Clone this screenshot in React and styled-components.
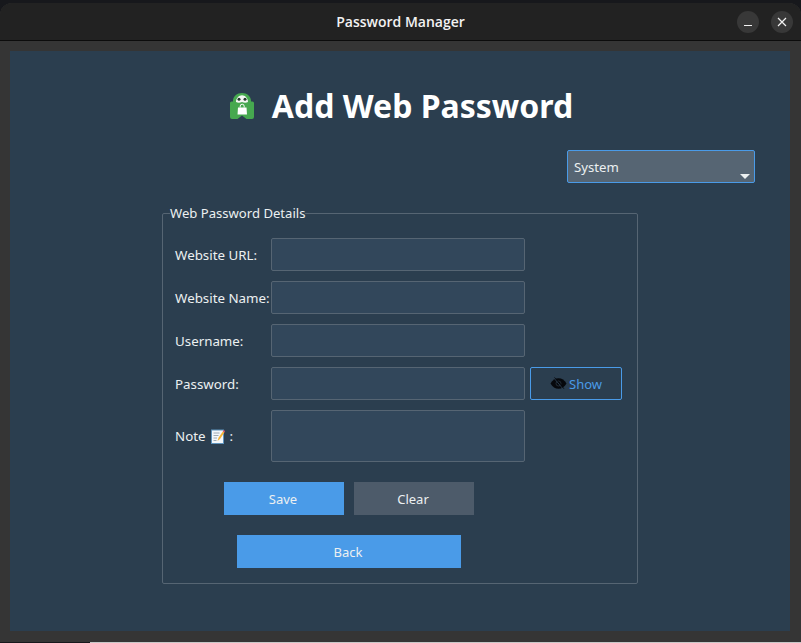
import styled, { createGlobalStyle } from "styled-components";

const GlobalStyle = createGlobalStyle`
  html, body {
    margin: 0;
    padding: 0;
    height: 100%;
    background: #17181c;
    overflow: hidden;
  }
  * {
    box-sizing: border-box;
  }
`;

const Screen = styled.div`
  width: 801px;
  height: 643px;
  padding-top: 3px;
  display: flex;
  flex-direction: column;
  font-family: "Noto Sans", "Open Sans", sans-serif;
`;

const Window = styled.div`
  width: 801px;
  height: 639px;
  flex-shrink: 0;
  display: flex;
  flex-direction: column;
  background: #353535;
  border-radius: 12px 12px 0 0;
  overflow: hidden;
`;

const DesktopStrip = styled.div`
  height: 1px;
  margin-left: 90px;
  background: #c8c8c8;
`;

const TitleBar = styled.div`
  height: 38px;
  flex-shrink: 0;
  display: flex;
  align-items: center;
  justify-content: flex-end;
  gap: 12px;
  padding: 0 8px 0 0;
  background: #222222;
  border-bottom: 1px solid #0c0c0c;
  position: relative;
`;

const WindowTitle = styled.div`
  position: absolute;
  left: 0;
  right: 0;
  top: 9px;
  text-align: center;
  font-family: "Open Sans", "Noto Sans", sans-serif;
  font-size: 14px;
  line-height: 20px;
  font-weight: 600;
  color: #f2f2f2;
`;

const WinButton = styled.button`
  width: 22px;
  height: 22px;
  padding: 0;
  border: 0;
  border-radius: 50%;
  background: #383838;
  display: flex;
  align-items: center;
  justify-content: center;
`;

const Panel = styled.div`
  margin: 10px 11px 0 10px;
  height: 580px;
  background: #2b3e4f;
  display: flex;
  flex-direction: column;
  align-items: center;
`;

const Heading = styled.div`
  display: flex;
  align-items: center;
  gap: 17px;
  margin-top: 32px;
  height: 46px;
  margin-left: 2px;
`;

const HeadingText = styled.h1`
  margin: 0;
  font-size: 32px;
  line-height: 46px;
  font-weight: 700;
  color: #ffffff;
`;

const ThemeRow = styled.div`
  align-self: stretch;
  display: flex;
  justify-content: flex-end;
  margin-top: 21px;
  padding-right: 35px;
`;

const Combo = styled.div`
  width: 188px;
  height: 33px;
  border: 1px solid #4a9be8;
  border-radius: 2px;
  background: #566573;
  color: #ecf0f1;
  font-size: 13.2px;
  line-height: 33px;
  padding: 0 6px;
  position: relative;
`;

const ComboArrow = styled.span`
  position: absolute;
  right: 4px;
  bottom: 3px;
  width: 0;
  height: 0;
  border-left: 5px solid transparent;
  border-right: 5px solid transparent;
  border-top: 5px solid #ecf0f1;
`;

const Details = styled.fieldset`
  width: 476px;
  height: 371px;
  margin: 30px 0 0 0;
  padding: 0 0 0 12px;
  border: 1px solid #566573;
  border-radius: 2px;
  position: relative;
`;

const DetailsTitle = styled.legend`
  position: absolute;
  left: 7px;
  top: -9px;
  padding: 0;
  background: #2b3e4f;
  font-size: 13.1px;
  line-height: 16px;
  color: #ecf0f1;
`;

const FormGrid = styled.div`
  display: grid;
  grid-template-columns: 96px 254px auto;
  row-gap: 10px;
  margin-top: 24px;
  align-items: center;
`;

const Label = styled.label`
  font-size: 13.33px;
  line-height: 18px;
  color: #ecf0f1;
  white-space: nowrap;
  display: flex;
  align-items: center;
  gap: 5px;
`;

const Field = styled.div`
  width: 254px;
  height: ${({ $tall }) => ($tall ? "52px" : "33px")};
  background: #32475b;
  border: 1px solid #566573;
  border-radius: 2px;
`;

const ShowButton = styled.button`
  width: 92px;
  height: 33px;
  margin-left: 5px;
  padding: 0;
  background: transparent;
  border: 1px solid #4a9be8;
  border-radius: 2px;
  color: #4a9be8;
  font-family: inherit;
  font-size: 13px;
  display: flex;
  align-items: center;
  justify-content: center;
  gap: 2px;
`;

const ActionRow = styled.div`
  display: flex;
  gap: 10px;
  margin: 20px 0 0 49px;
`;

const ActionButton = styled.button`
  width: ${({ $wide }) => ($wide ? "224px" : "120px")};
  height: 33px;
  padding: 0 2px 0 0;
  border: 0;
  background: ${({ $muted }) => ($muted ? "#4d5b6a" : "#4a9be8")};
  color: #ecf0f1;
  font-family: inherit;
  font-size: 13px;
`;

const BackRow = styled.div`
  margin: 20px 0 0 62px;
`;

const ShieldLogo = () => (
  <svg width="26" height="29" viewBox="0 0 26 29">
    <path
      d="M4 9.500V9C4 4.500 8 1 13 1s9 3.500 9 8v.500h1.500A1.500 1.500 0 0 1 25 11v14a2 2 0 0 1-2 2h-5.500L13 23.500 8.500 27H3a2 2 0 0 1-2-2V11a1.500 1.500 0 0 1 1.500-1.500z"
      fill="#46a84f"
    />
    <path d="M7 10C7 6 10 3.200 13 3.200S19 6 19 10c-2 1-4 .800-6 0-2 .800-4 1-6 0z" fill="#f4f7f4" />
    <circle cx="10" cy="7.200" r="1.500" fill="#24382c" />
    <circle cx="16" cy="7.200" r="1.500" fill="#24382c" />
    <path d="M9 15.500h8.500l.5 7H8.500z" fill="#ffffff" />
    <path d="M11.200 15.500v-1.300a2 2 0 0 1 4 0v1.300" fill="none" stroke="#ffffff" strokeWidth="1" />
  </svg>
);

const HiddenEye = () => (
  <svg width="17" height="13" viewBox="0 0 17 13">
    <path d="M0.500 6.500C2.500 3 5.200 1.200 8.500 1.200s6 1.800 8 5.300c-2 3.500-4.700 5.300-8 5.300S2.500 10 0.500 6.500z" fill="#06080c" />
    <circle cx="8.500" cy="6.500" r="2.500" fill="none" stroke="#27333f" strokeWidth="0.800" />
    <path d="M3.800 0.800l9.500 11.400" stroke="#2b3e4f" strokeWidth="1" />
    <path d="M4.500 0.400l9.500 11.400" stroke="#06080c" strokeWidth="0.800" />
  </svg>
);

const MemoIcon = () => (
  <svg width="14" height="15" viewBox="0 0 14 15">
    <rect x="0.500" y="1" width="12" height="13.500" fill="#f3f7fb" stroke="#5e93bd" />
    <path d="M2.500 4h6M2.500 6.500h5M2.500 9h3.500M2.500 11.500h3" stroke="#8a97a3" strokeWidth="0.800" />
    <path d="M6.500 12l1-3.200 4.300-6.300 1.600 1-4.400 6.500z" fill="#f5b335" />
    <path d="M11.800 2.500l.8-1.500 1.400 1-.6 1.500z" fill="#e2566b" />
  </svg>
);

const App = () => {
  return (
    <>
      <GlobalStyle />
      <Screen>
        <Window>
          <TitleBar>
            <WindowTitle>Password Manager</WindowTitle>
            <WinButton>
              <svg width="10" height="10" viewBox="0 0 10 10">
                <path d="M1 8.500h8" stroke="#f2f2f2" strokeWidth="1.200" />
              </svg>
            </WinButton>
            <WinButton>
              <svg width="10" height="10" viewBox="0 0 10 10">
                <path d="M1 1l8 8M9 1l-8 8" stroke="#f2f2f2" strokeWidth="1.200" />
              </svg>
            </WinButton>
          </TitleBar>
          <Panel>
            <Heading>
              <ShieldLogo />
              <HeadingText>Add Web Password</HeadingText>
            </Heading>
            <ThemeRow>
              <Combo>
                System
                <ComboArrow />
              </Combo>
            </ThemeRow>
            <Details>
              <DetailsTitle>Web Password Details</DetailsTitle>
              <FormGrid>
                <Label>Website URL:</Label>
                <Field />
                <span />
                <Label>Website Name:</Label>
                <Field />
                <span />
                <Label>Username:</Label>
                <Field />
                <span />
                <Label>Password:</Label>
                <Field />
                <ShowButton>
                  <HiddenEye />
                  Show
                </ShowButton>
                <Label>
                  Note <MemoIcon /> :
                </Label>
                <Field $tall />
                <span />
              </FormGrid>
              <ActionRow>
                <ActionButton>Save</ActionButton>
                <ActionButton $muted>Clear</ActionButton>
              </ActionRow>
              <BackRow>
                <ActionButton $wide>Back</ActionButton>
              </BackRow>
            </Details>
          </Panel>
        </Window>
        <DesktopStrip />
      </Screen>
    </>
  );
};

export default App;
